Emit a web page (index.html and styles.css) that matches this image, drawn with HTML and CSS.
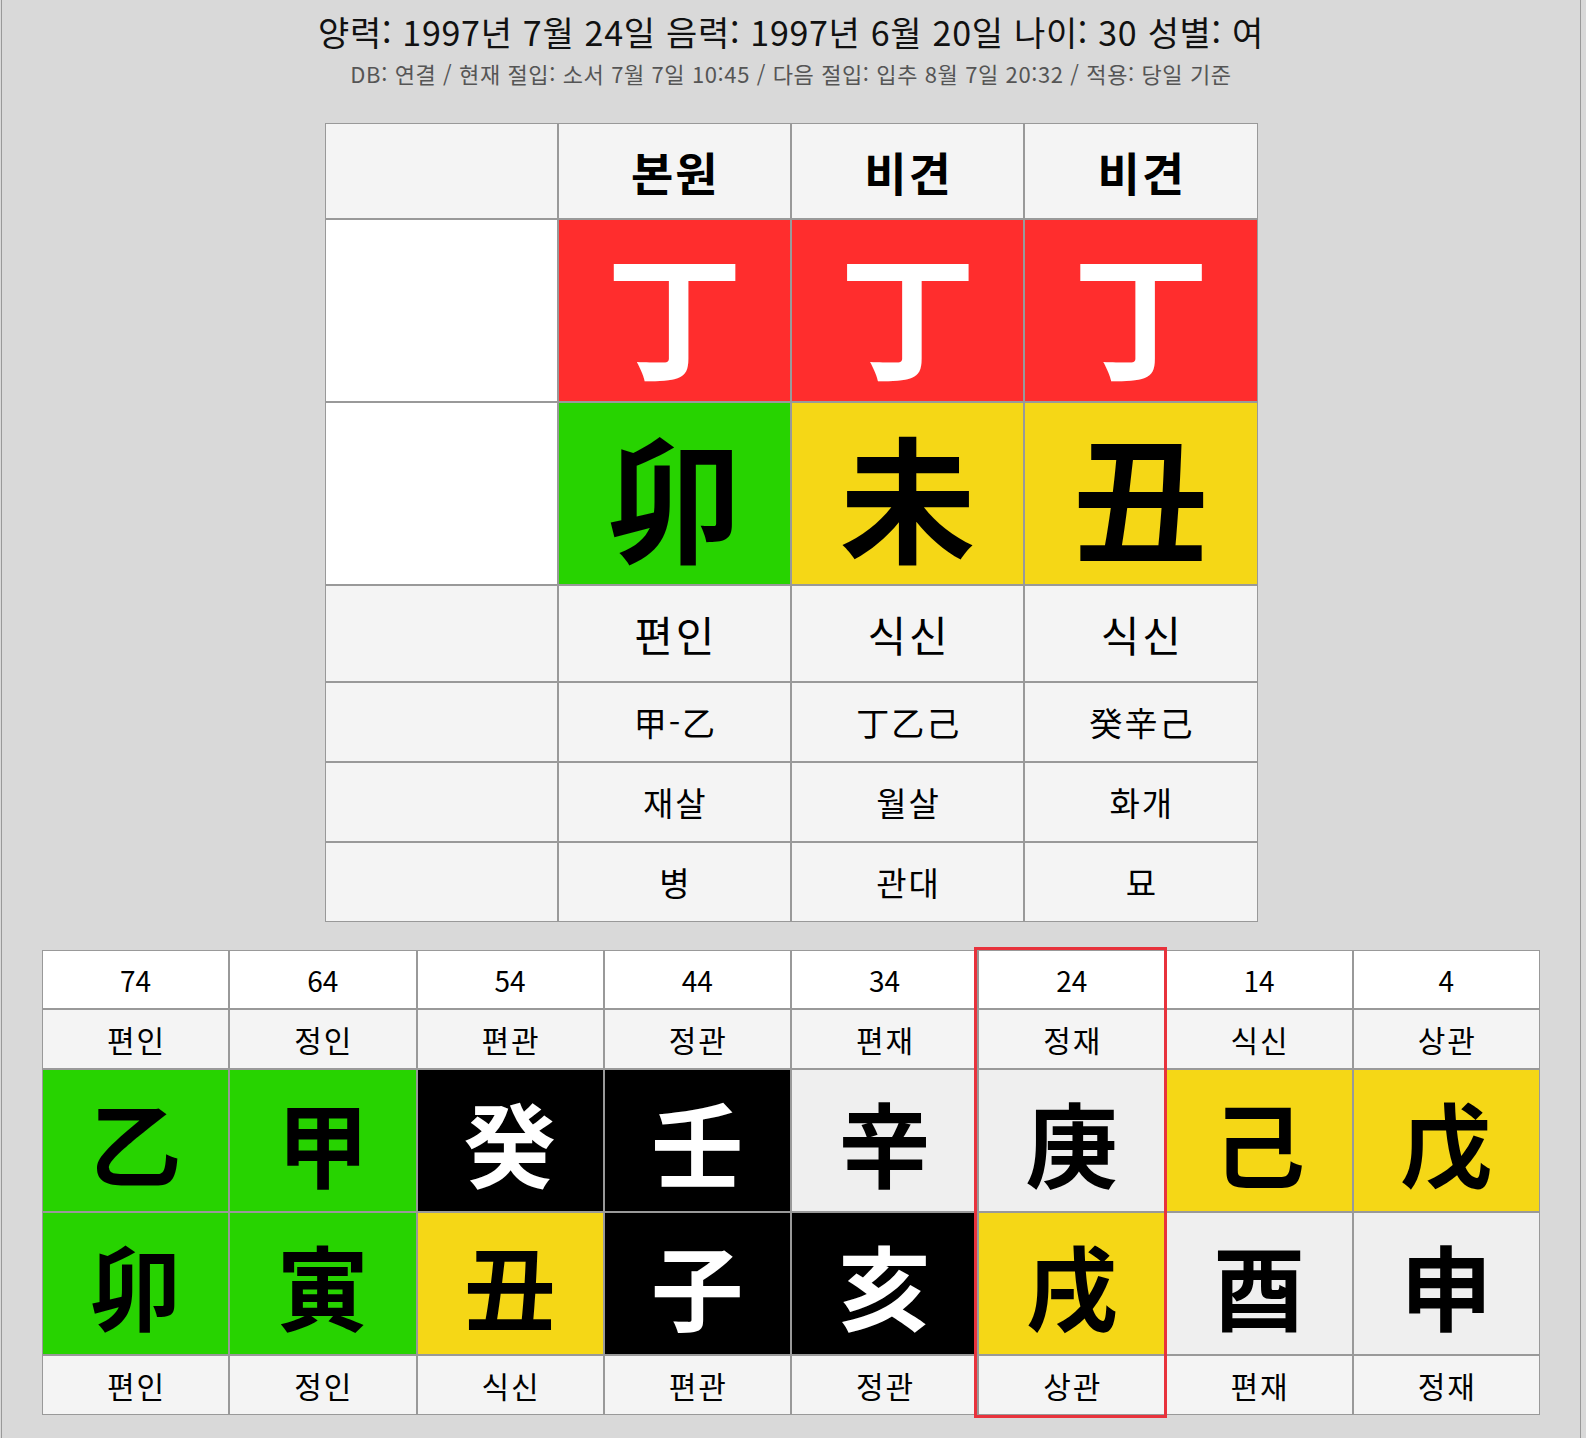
FILE: index.html
```html
<!DOCTYPE html>
<html lang="ko">
<head>
<meta charset="utf-8">
<title>사주</title>
<link rel="stylesheet" href="styles.css">
</head>
<body>
<div class="page">
  <div class="title">양력: 1997년 7월 24일 음력: 1997년 6월 20일 나이: 30 성별: 여</div>
  <div class="sub">DB: 연결 / 현재 절입: 소서 7월 7일 10:45 / 다음 절입: 입추 8월 7일 20:32 / 적용: 당일 기준</div>

  <table class="saju">
    <tr class="r-hdr">
      <td class="gray"></td><td class="gray">본원</td><td class="gray">비견</td><td class="gray">비견</td>
    </tr>
    <tr class="r-big">
      <td class="white"></td><td class="fire">丁</td><td class="fire">丁</td><td class="fire">丁</td>
    </tr>
    <tr class="r-big">
      <td class="white"></td><td class="wood">卯</td><td class="earth">未</td><td class="earth">丑</td>
    </tr>
    <tr class="r-god">
      <td class="gray"></td><td class="gray">편인</td><td class="gray">식신</td><td class="gray">식신</td>
    </tr>
    <tr class="r-sm">
      <td class="gray"></td><td class="gray">甲-乙</td><td class="gray">丁乙己</td><td class="gray">癸辛己</td>
    </tr>
    <tr class="r-sm">
      <td class="gray"></td><td class="gray">재살</td><td class="gray">월살</td><td class="gray">화개</td>
    </tr>
    <tr class="r-sm">
      <td class="gray"></td><td class="gray">병</td><td class="gray">관대</td><td class="gray">묘</td>
    </tr>
  </table>

  <div class="daeun-wrap">
    <table class="daeun">
      <tr class="d-num">
        <td>74</td><td>64</td><td>54</td><td>44</td><td>34</td><td>24</td><td>14</td><td>4</td>
      </tr>
      <tr class="d-god">
        <td>편인</td><td>정인</td><td>편관</td><td>정관</td><td>편재</td><td>정재</td><td>식신</td><td>상관</td>
      </tr>
      <tr class="d-big">
        <td class="wood">乙</td><td class="wood">甲</td><td class="water">癸</td><td class="water">壬</td><td class="metal">辛</td><td class="metal">庚</td><td class="earth">己</td><td class="earth">戊</td>
      </tr>
      <tr class="d-big">
        <td class="wood">卯</td><td class="wood">寅</td><td class="earth">丑</td><td class="water">子</td><td class="water">亥</td><td class="earth">戌</td><td class="metal">酉</td><td class="metal">申</td>
      </tr>
      <tr class="d-god">
        <td>편인</td><td>정인</td><td>식신</td><td>편관</td><td>정관</td><td>상관</td><td>편재</td><td>정재</td>
      </tr>
    </table>
    <div class="current"></div>
  </div>
</div>
</body>
</html>
```
FILE: styles.css
```css
html, body {
  margin: 0;
  padding: 0;
  background: #d9d9d9;
}
body {
  font-family: "Noto Sans CJK KR", "Noto Sans", sans-serif;
  color: #000;
}
.page {
  box-sizing: border-box;
  width: 1580px;
  min-height: 1438px;
  margin-left: 1px;
  border-left: 1px solid #999;
  border-right: 1px solid #999;
  padding-top: 12px;
}
.title {
  text-align: center;
  font-size: 34px;
  line-height: 40px;
  letter-spacing: 0.7px;
  color: #111;
}
.sub {
  text-align: center;
  font-size: 22px;
  line-height: 28px;
  letter-spacing: 0.6px;
  margin-top: 7px;
  color: #555;
}
.saju {
  margin: 36px auto 0;
  width: 933px;
  table-layout: fixed;
  border-collapse: separate;
  border-spacing: 0;
}
.saju td, .daeun td {
  box-sizing: border-box;
  border: 1px solid #999;
  padding: 0;
  text-align: center;
  vertical-align: middle;
}
.gray { background: #f4f4f4; }
.white { background: #fff; }
.fire { background: #ff2d2d; color: #fff; }
.wood { background: #27d300; color: #000; }
.earth { background: #f5d716; color: #000; }
.water { background: #000; color: #fff; }
.metal { background: #efefef; color: #000; }

.r-hdr td { height: 96px; font-size: 46px; font-weight: 700; line-height: 1; letter-spacing: 2px; padding-left: 2px; }
.r-big td { height: 183px; font-size: 136px; font-weight: 700; line-height: 1; }
.r-god td { height: 97px; font-size: 42px; line-height: 1; letter-spacing: 3px; padding-left: 3px; }
.r-sm td { height: 80px; font-size: 33px; line-height: 1; letter-spacing: 2px; padding-left: 2px; }

.daeun-wrap {
  position: relative;
  width: 1498px;
  margin: 28px auto 0;
}
.daeun {
  width: 1498px;
  table-layout: fixed;
  border-collapse: separate;
  border-spacing: 0;
}
.d-num td { height: 59px; background: #fff; font-size: 28px; line-height: 1; }
.d-god td { height: 60px; background: #f4f4f4; font-size: 30px; line-height: 1; letter-spacing: 2px; padding-left: 2px; }
.d-big td { height: 143px; font-size: 92px; font-weight: 700; line-height: 1; }
.current {
  position: absolute;
  left: 932px;
  top: -3px;
  width: 193px;
  height: 471px;
  box-sizing: border-box;
  border: 3px solid #e8323c;
  pointer-events: none;
}
```
